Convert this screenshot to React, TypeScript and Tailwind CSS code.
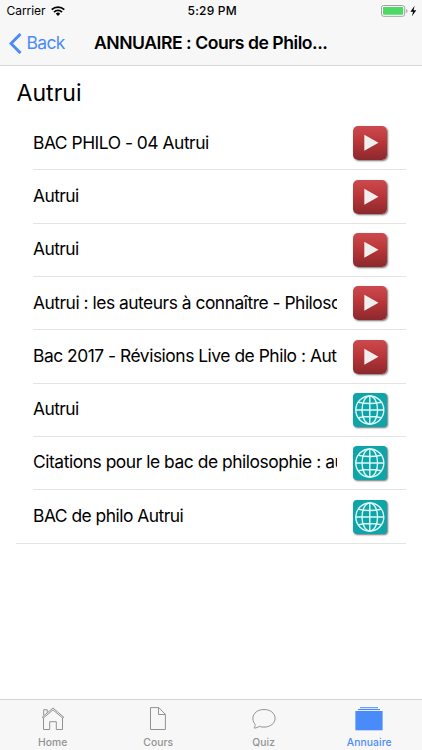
import type { ReactNode } from "react";

/* =========================
   DATA
========================= */
type Kind = "video" | "web";

const links: { title: string; kind: Kind; tracking: string }[] = [
  { title: "BAC PHILO - 04 Autrui", kind: "video", tracking: "tracking-[-0.47px]" },
  { title: "Autrui", kind: "video", tracking: "tracking-[-0.55px]" },
  { title: "Autrui", kind: "video", tracking: "tracking-[-0.55px]" },
  { title: "Autrui : les auteurs à connaître - Philosophie", kind: "video", tracking: "tracking-[-0.48px]" },
  { title: "Bac 2017 - Révisions Live de Philo : Autrui", kind: "video", tracking: "tracking-[-0.47px]" },
  { title: "Autrui", kind: "web", tracking: "tracking-[-0.55px]" },
  { title: "Citations pour le bac de philosophie : autrui", kind: "web", tracking: "tracking-[-0.45px]" },
  { title: "BAC de philo Autrui", kind: "web", tracking: "tracking-[-0.5px]" },
];

/* =========================
   ICONS
========================= */
function WifiIcon() {
  return (
    <svg width="14" height="10" viewBox="0 0 14 10" fill="none" stroke="#000" strokeWidth="1.7">
      <path d="M0.7 3.7a8.9 8.9 0 0 1 12.6 0" />
      <path d="M3 6.1a5.7 5.7 0 0 1 8 0" />
      <path d="M7 9.9L4.8 7.7a3.1 3.1 0 0 1 4.4 0z" fill="#000" stroke="none" />
    </svg>
  );
}

function BatteryIcon() {
  return (
    <svg width="37" height="12" viewBox="0 0 37 12">
      <rect x="0.5" y="0.5" width="23.2" height="10.8" rx="2.2" fill="#fff" stroke="#a2a2a2" />
      <rect x="2" y="2" width="20.2" height="7.8" rx="0.8" fill="#4cd964" />
      <path d="M25.2 4v4c1-.4 1.2-1.1 1.2-2s-.2-1.6-1.2-2z" fill="#a2a2a2" />
      <path d="M33.6 .8L29.4 6.7h2.7l-1.2 4.5 4.4-6h-2.8z" fill="#000" />
    </svg>
  );
}

function VideoIcon() {
  return (
    <span className="flex h-[34px] w-[34px] items-center justify-center rounded-[5px] bg-linear-to-b from-[#cc4a4d] via-[#b83437] to-[#8b292d] shadow-[1px_1px_2px_rgba(0,0,0,0.55)]">
      <svg width="34" height="34" viewBox="0 0 34 34">
        <path d="M11.3 8.8L25.5 16.7L11.3 24.7Z" fill="#efefef" />
      </svg>
    </span>
  );
}

function WebIcon() {
  return (
    <span className="flex h-[34px] w-[34px] items-center justify-center rounded-[4px] bg-[#0fa5a8] shadow-[1px_1px_2px_rgba(0,0,0,0.55)]">
      <svg width="34" height="34" viewBox="0 0 34 34" fill="none" stroke="#dcfafa" strokeWidth="1.4">
        <circle cx="16.8" cy="17" r="14" />
        <ellipse cx="16.8" cy="17" rx="7.8" ry="14" />
        <path d="M16.8 3v28M2.8 17h28M5.4 9.3q11.4 2.4 22.8 0M5.4 24.7q11.4-2.4 22.8 0" />
      </svg>
    </span>
  );
}

function HomeIcon() {
  return (
    <svg width="24" height="24" viewBox="0 0 24 24" fill="none" stroke="#929292">
      <path d="M1.2 10.2L12 1l10.8 9.2-.9 1L12 2.9 2.1 11.2z" />
      <path d="M2.7 8.5V2.7h3.5v3" />
      <path d="M2.5 11v11.5h6.2v-7.8h6.6v7.8h6.2V11" />
    </svg>
  );
}

function DocIcon() {
  return (
    <svg width="18" height="24" viewBox="0 0 18 24" fill="none" stroke="#929292">
      <path d="M1.5 .6h8.3l6.6 6.8v15.1H1.5z" />
      <path d="M9.5 .6v6.9h6.9" />
    </svg>
  );
}

function ChatIcon() {
  return (
    <svg width="24" height="24" viewBox="0 0 24 24" fill="none" stroke="#929292">
      <path d="M12 2.5C5.6 2.5.9 6.3.9 11.3c0 2.800 1.100 4.600 2.300 6.200.2 1.300-.8 2.500-1.100 3.500 2 .1 3.700-.7 5.200-1.600 1.500.5 3 .7 4.700.7 6.400 0 11.100-3.800 11.100-8.800S18.400 2.500 12 2.500z" />
    </svg>
  );
}

function StackIcon() {
  return (
    <svg width="28" height="24" viewBox="0 0 28 24" fill="#4a8bfc">
      <rect x="5" y="0.2" width="18" height="1" />
      <rect x="3" y="2" width="22" height="1.1" />
      <rect x="0.4" y="4" width="27.2" height="19.3" />
    </svg>
  );
}

/* =========================
   COMPONENTS
========================= */
function Tab({ label, active, children }: { label: string; active?: boolean; children: ReactNode }) {
  return (
    <button
      className={
        "flex flex-1 flex-col items-center pt-[7px] text-[10.3px] font-medium tracking-[0.1px] " +
        (active ? "text-[#4a8bfc]" : "text-[#929292]")
      }
    >
      {children}
      <span className="mt-[4px] leading-[15px]">{label}</span>
    </button>
  );
}

/* =========================
   PAGE
========================= */
export default function App() {
  return (
    <div className="flex h-[750px] w-[422px] flex-col overflow-hidden bg-white font-['Inter',sans-serif] text-black">

      {/* STATUS + NAV BAR */}
      <header className="h-[66px] shrink-0 border-b border-[#d9d9d9] bg-[#f7f7f7]">
        <div className="grid h-[22px] grid-cols-3 items-center pr-[4px] pl-[6.5px] text-[12px]">
          <div className="flex items-center gap-[6px]">
            <span className="tracking-[-0.05px]">Carrier</span>
            <WifiIcon />
          </div>
          <span className="text-center font-medium tracking-[0.2px]">5:29 PM</span>
          <div className="flex justify-end">
            <BatteryIcon />
          </div>
        </div>
        <div className="flex h-[43px] items-center pl-[8.5px]">
          <button className="flex w-[85.5px] items-center gap-[5px] text-[17.5px] tracking-[-0.65px] text-[#4a8bfc]">
            <svg width="13" height="21" viewBox="0 0 13 21" fill="none" stroke="#4a8bfc" strokeWidth="3">
              <path d="M11.5 1L2 10.5L11.5 20" />
            </svg>
            Back
          </button>
          <h1 className="text-[17.6px] font-semibold tracking-[-0.47px] whitespace-nowrap">
            ANNUAIRE : Cours de Philo...
          </h1>
        </div>
      </header>

      {/* LINK LIST */}
      <main className="flex-1 px-[16px]">
        <h2 className="h-[51.2px] pt-[12px] pl-[0.5px] text-[23px] leading-[30px] tracking-[0.05px]">Autrui</h2>
        <ul className="border-b border-[#e4e4e4]">
          {links.map((link, i) => (
            <li
              key={i}
              className={
                "ml-[17px] flex items-center justify-between pr-[19px] " +
                (i < links.length - 1 ? "h-[53.3px] border-b border-[#e4e4e4]" : "h-[52.5px]")
              }
            >
              <span className={"mb-[1.4px] w-[304px] overflow-hidden text-[17.4px] leading-[26px] whitespace-nowrap " + link.tracking}>
                {link.title}
              </span>
              {link.kind === "video" ? <VideoIcon /> : <WebIcon />}
            </li>
          ))}
        </ul>
      </main>

      {/* TAB BAR */}
      <nav className="flex h-[51px] shrink-0 border-t border-[#d4d4d4] bg-[#f7f7f7]">
        <Tab label="Home">
          <HomeIcon />
        </Tab>
        <Tab label="Cours">
          <DocIcon />
        </Tab>
        <Tab label="Quiz">
          <ChatIcon />
        </Tab>
        <Tab label="Annuaire" active>
          <StackIcon />
        </Tab>
      </nav>
    </div>
  );
}
